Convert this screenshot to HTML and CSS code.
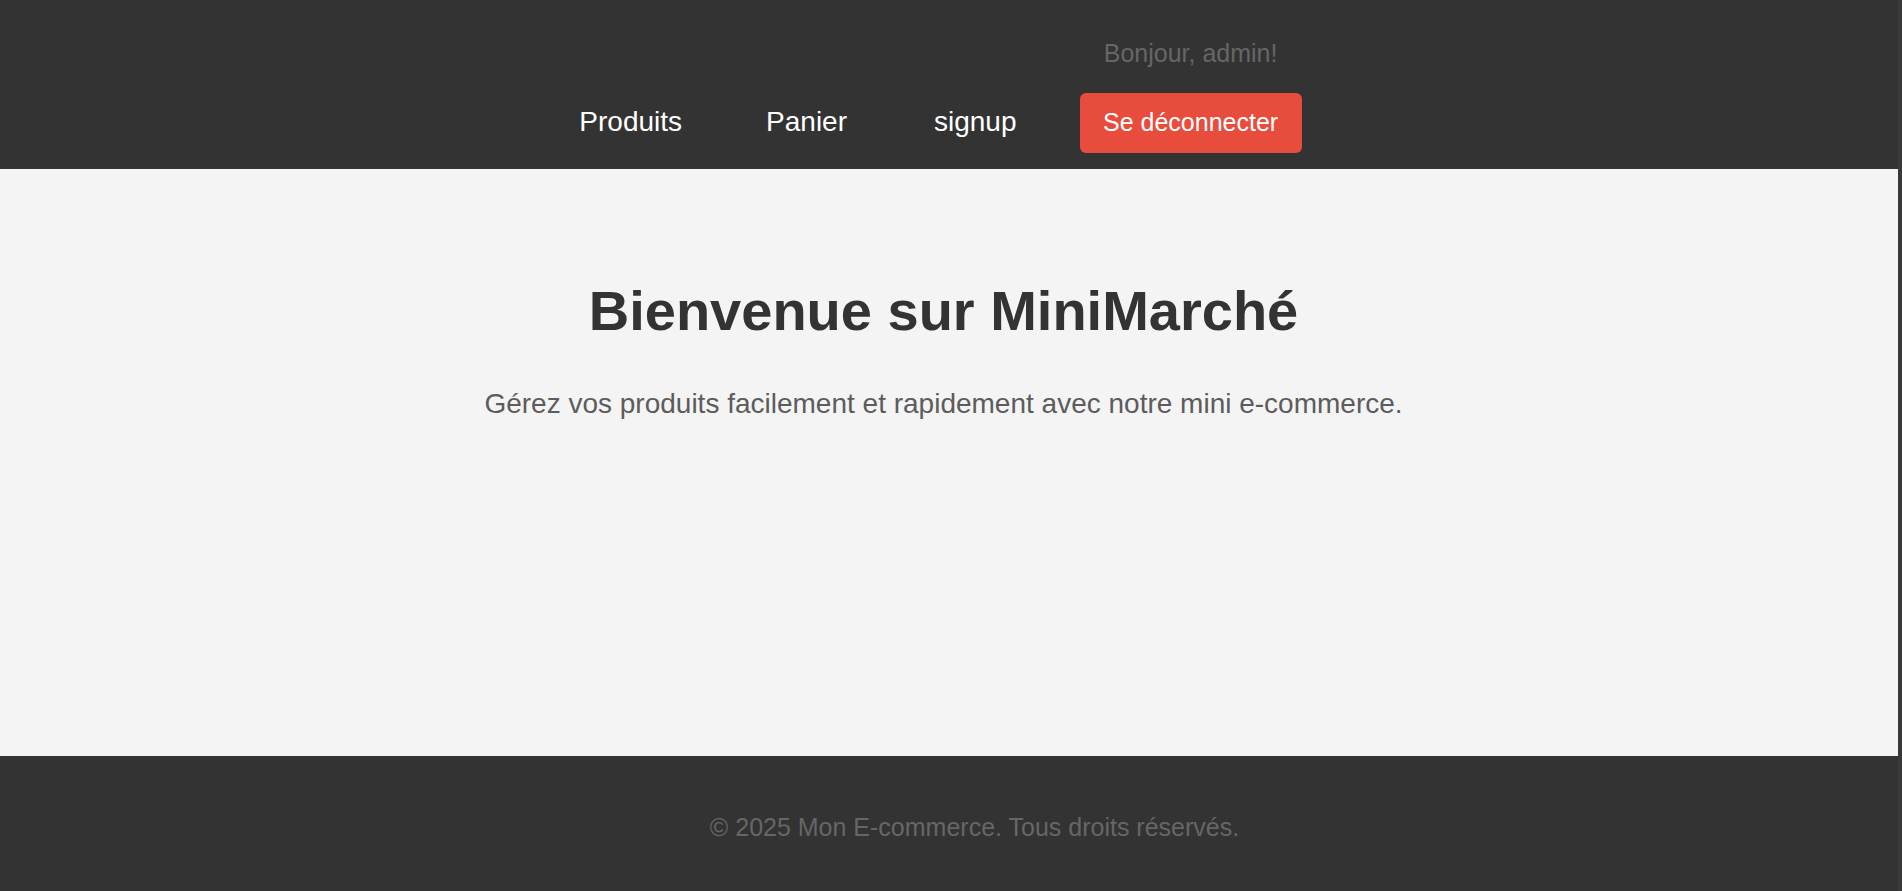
FILE: index.html
```html
<!DOCTYPE html>
<html lang="fr">
<head>
<meta charset="utf-8">
<title>MiniMarché</title>
<link rel="stylesheet" href="styles.css">
</head>
<body>
<header class="site-header">
  <nav class="nav">
    <a class="nav-link nav-link-first" href="#">Produits</a>
    <a class="nav-link" href="#">Panier</a>
    <a class="nav-link" href="#">signup</a>
    <div class="user-block">
      <span class="greeting">Bonjour, admin!</span>
      <a class="logout-btn" href="#">Se déconnecter</a>
    </div>
  </nav>
</header>
<main class="hero">
  <h1 class="hero-title">Bienvenue sur MiniMarché</h1>
  <p class="hero-text">Gérez vos produits facilement et rapidement avec notre mini e-commerce.</p>
</main>
<footer class="site-footer">
  <p class="footer-text">© 2025 Mon E-commerce. Tous droits réservés.</p>
</footer>
</body>
</html>
```
FILE: styles.css
```css
html, body {
  margin: 0;
  padding: 0;
}
body {
  background: #333333;
  border-right: 4px solid #393939;
  font-family: "Liberation Sans", Arial, sans-serif;
}
.site-header {
  background: #333333;
  display: flex;
  justify-content: center;
  padding: 39px 41px 16px 0;
}
.nav {
  display: flex;
  align-items: flex-end;
  gap: 39px;
}
.nav-link {
  color: #ffffff;
  text-decoration: none;
  font-size: 28px;
  padding: 0 24px 15px;
}
.nav-link-first {
  padding-right: 21px;
}
.user-block {
  display: flex;
  flex-direction: column;
  align-items: center;
}
.greeting {
  color: #666666;
  font-size: 25px;
  margin-bottom: 25px;
}
.logout-btn {
  background: #e74c3c;
  color: #ffffff;
  text-decoration: none;
  font-size: 25px;
  padding: 15px 23.5px 16px;
  border-radius: 6px;
}
.hero {
  background: #f4f4f4;
  text-align: center;
  padding: 109px 11px 336px 0;
}
.hero-title {
  margin: 0;
  font-size: 56px;
  font-weight: bold;
  color: #333333;
}
.hero-text {
  margin: 45px 0 0;
  font-size: 28px;
  color: #5c5c5c;
}
.site-footer {
  background: #333333;
  text-align: center;
  padding: 57px 0 49px 51px;
}
.footer-text {
  margin: 0;
  font-size: 25px;
  color: #666666;
}
```
